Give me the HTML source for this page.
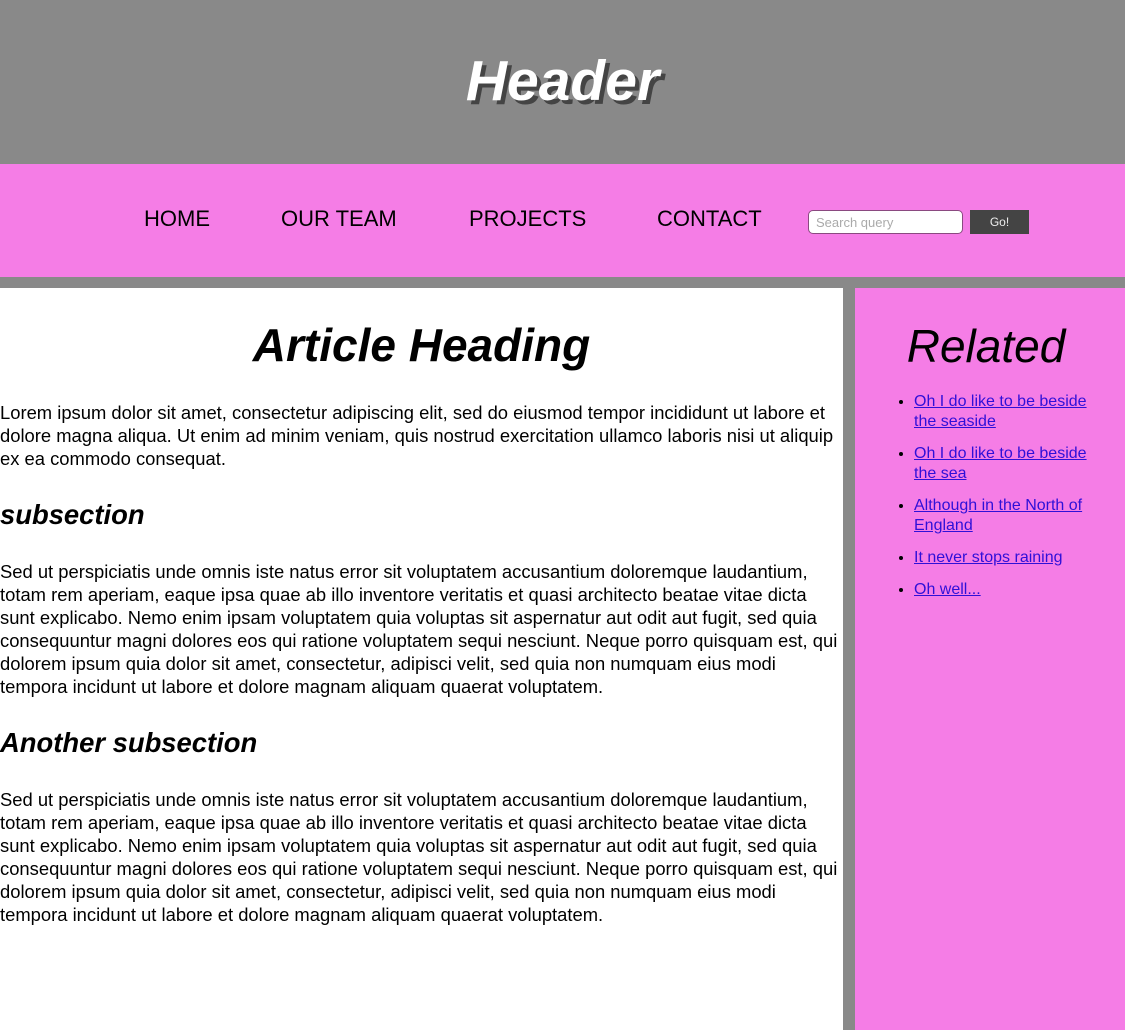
<!DOCTYPE html>
<html><head><style>
*{margin:0;padding:0;box-sizing:border-box}
body{width:1125px;height:1030px;background:#898989;font-family:"Liberation Sans",Arial,sans-serif;overflow:hidden;position:relative}
.hdr{position:absolute;left:0;top:0;width:1125px;height:163px;background:#898989}
.hdr h1{position:absolute;left:0;width:1125px;top:45px;text-align:center;font-size:57px;font-style:italic;font-weight:bold;color:#fff;text-shadow:4px 4px 0 #444;line-height:72px}
.nav{position:absolute;left:0;top:164px;width:1125px;height:113px;background:#f57de6}
.nav a{position:absolute;top:42px;font-size:22px;color:#000;text-decoration:none;line-height:26px}
.inp{position:absolute;left:808px;top:46px;width:155px;height:24px;background:#fff;border:1.5px solid #8a4a80;border-radius:5px;font-size:13px;color:#aaa;padding:4px 0 0 7px}
.btn{position:absolute;left:970px;top:46px;width:59px;height:24px;background:#444;color:#eee;font-size:12px;text-align:center;line-height:24px}
.main{position:absolute;left:0;top:288px;width:843px;height:742px;background:#fff}
.main h2{text-align:center;font-size:46px;font-style:italic;font-weight:bold;line-height:56px;margin-top:29px;margin-bottom:28px}
.main p{font-size:18.4px;line-height:23px;width:840px}
.main h3{font-size:27.4px;font-style:italic;font-weight:bold;line-height:34px;margin:28px 0 28px}
.aside{position:absolute;left:855px;top:288px;width:270px;height:742px;background:#f57de6}
.aside h2{text-align:center;font-size:46px;font-style:italic;font-weight:normal;line-height:56px;margin-top:30px;margin-bottom:18px;padding-right:8px}
.aside ul{padding-left:59px;font-size:16px;line-height:20px}
.aside li{margin-bottom:12px;padding-right:30px}
.aside a{color:#2f10d8}
</style></head><body>
<div class="hdr"><h1>Header</h1></div>
<div class="nav">
<a style="left:144px">HOME</a><a style="left:281px">OUR TEAM</a><a style="left:469px">PROJECTS</a><a style="left:657px">CONTACT</a>
<div class="inp">Search query</div><div class="btn">Go!</div>
</div>
<div class="main">
<h2>Article Heading</h2>
<p>Lorem ipsum dolor sit amet, consectetur adipiscing elit, sed do eiusmod tempor incididunt ut labore et dolore magna aliqua. Ut enim ad minim veniam, quis nostrud exercitation ullamco laboris nisi ut aliquip ex ea commodo consequat.</p>
<h3>subsection</h3>
<p>Sed ut perspiciatis unde omnis iste natus error sit voluptatem accusantium doloremque laudantium, totam rem aperiam, eaque ipsa quae ab illo inventore veritatis et quasi architecto beatae vitae dicta sunt explicabo. Nemo enim ipsam voluptatem quia voluptas sit aspernatur aut odit aut fugit, sed quia consequuntur magni dolores eos qui ratione voluptatem sequi nesciunt. Neque porro quisquam est, qui dolorem ipsum quia dolor sit amet, consectetur, adipisci velit, sed quia non numquam eius modi tempora incidunt ut labore et dolore magnam aliquam quaerat voluptatem.</p>
<h3>Another subsection</h3>
<p>Sed ut perspiciatis unde omnis iste natus error sit voluptatem accusantium doloremque laudantium, totam rem aperiam, eaque ipsa quae ab illo inventore veritatis et quasi architecto beatae vitae dicta sunt explicabo. Nemo enim ipsam voluptatem quia voluptas sit aspernatur aut odit aut fugit, sed quia consequuntur magni dolores eos qui ratione voluptatem sequi nesciunt. Neque porro quisquam est, qui dolorem ipsum quia dolor sit amet, consectetur, adipisci velit, sed quia non numquam eius modi tempora incidunt ut labore et dolore magnam aliquam quaerat voluptatem.</p>
</div>
<div class="aside">
<h2>Related</h2>
<ul>
<li><a href="#">Oh I do like to be beside the seaside</a></li>
<li><a href="#">Oh I do like to be beside the sea</a></li>
<li><a href="#">Although in the North of England</a></li>
<li><a href="#">It never stops raining</a></li>
<li><a href="#">Oh well...</a></li>
</ul>
</div>
</body></html>
